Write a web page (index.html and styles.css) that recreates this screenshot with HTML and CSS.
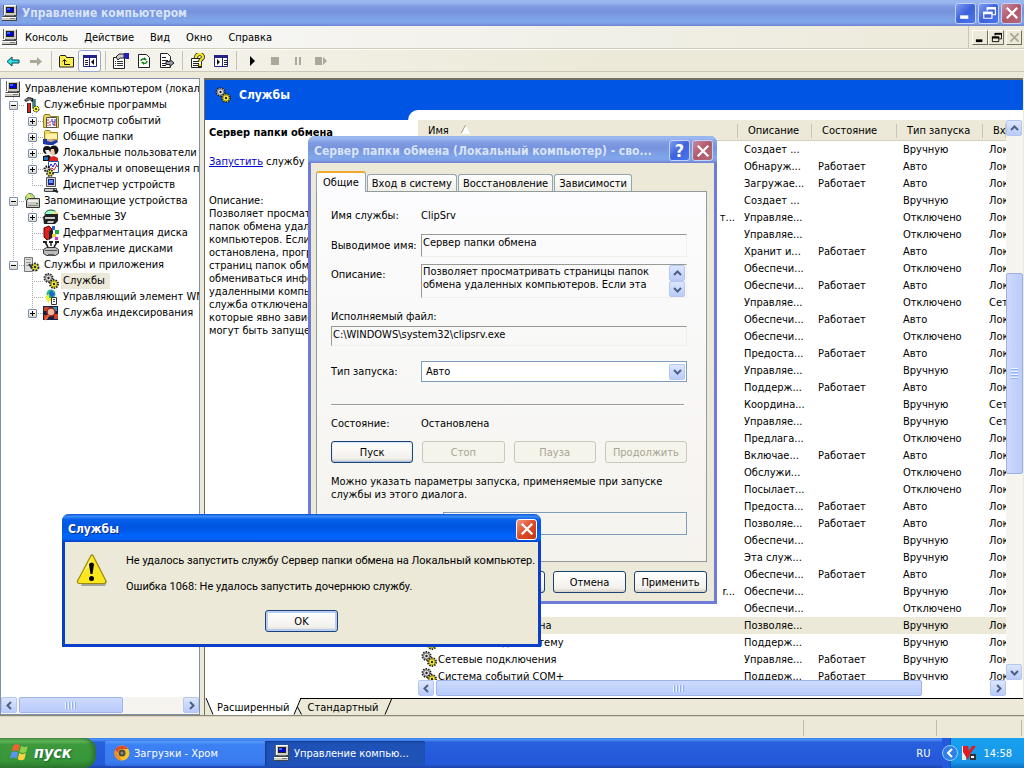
FILE: index.html
```html
<!DOCTYPE html>
<html lang="ru">
<head>
<meta charset="utf-8">
<title>Управление компьютером</title>
<link rel="stylesheet" href="styles.css">
</head>
<body>
<svg class="defs" width="0" height="0" aria-hidden="true">
  <symbol id="pc" viewBox="0 0 16 16">
    <path fill="#444" d="M3 0h11l1 1v10H3zM1 11h13l1 1v4H0v-4z"/>
    <path fill="#cfccc0" d="M2 0h12v10H2zM0 12h14v3H0z"/>
    <path fill="#777" d="M4 10h8v1H4zM8 13h5v1H8z"/>
    <path fill="#222" d="M4 2h8v6H4z"/><path fill="#00d" d="M5 3h6v4H5z"/><path fill="#36f" d="M5 3h3v2H5z"/>
    <path fill="#fff" d="M2 0h12v1H2zM2 0h1v10H2zM0 12h14v1H0z"/>
    <path fill="#666" d="M1 0h1v10H1z"/>
  </symbol>
  <symbol id="gears" viewBox="0 0 16 16">
    <circle cx="5.500" cy="5" r="4" fill="#bbb" stroke="#222" stroke-width="2" stroke-dasharray="1.400 1.100"/>
    <circle cx="5.500" cy="5" r="3" fill="#e8e8e8" stroke="#777"/><circle cx="5.500" cy="5" r="1.200" fill="#222"/>
    <circle cx="11" cy="11" r="4" fill="#dd3" stroke="#222" stroke-width="2" stroke-dasharray="1.400 1.100"/>
    <circle cx="11" cy="11" r="3" fill="#fbee3a" stroke="#a89a10"/><circle cx="11" cy="11" r="1.200" fill="#222"/>
  </symbol>
  <symbol id="tools" viewBox="0 0 16 16">
    <path fill="#222" d="M0 3l4-3 5 1 1 3-2 1-2-2-4 2zM3 6h4v10H3z"/><path fill="#d22" d="M4 6h2v9H4z"/>
    <path fill="#777" d="M1 2l3-1 4 1v1H5L2 4z"/><path stroke="#111" stroke-width="3" d="M10 2v9"/><path stroke="#3bb" stroke-width="1.4" d="M10 2v9"/>
    <circle cx="12" cy="12" r="3" fill="#ee3" stroke="#222" stroke-dasharray="2 1"/><circle cx="12" cy="12" r="1" fill="#222"/>
  </symbol>
  <symbol id="events" viewBox="0 0 16 16">
    <path fill="#e9d45c" stroke="#8c7a20" d="M.5 3.500l1-2h5l1 2h8v11H.5z"/><path fill="#fff" stroke="#555" d="M3.500 4.500h10v10h-10z"/>
    <path stroke="#c22" d="M5 6v7M7 8v5" stroke-dasharray="2 1"/><path fill="none" stroke="#22c" d="M9 6v3h3V6M9 11h2v2"/><path stroke="#c22" d="M12 9v4"/>
  </symbol>
  <symbol id="share" viewBox="0 0 16 16">
    <path fill="#eed964" stroke="#9a8425" d="M1.500 10V2.500l1-1h4l1 2h7V11z"/><path fill="#fff3a6" d="M3 5h11v5H3z"/>
    <path fill="#1d39a5" d="M0 10h4l3 2 7-1 1 2-5 3H5l-5-1z"/><path fill="#d5a889" d="M4 10h5l2 2-3 1-4-1z"/>
  </symbol>
  <symbol id="users" viewBox="0 0 16 16">
    <circle cx="4" cy="5" r="4" fill="#111"/><path fill="#eee" d="M2 5h4l2 3-4 2z"/><circle cx="11" cy="5" r="4.500" fill="#111"/>
    <path fill="#f0c9a8" d="M8 4h3l1 5-3 2-2-3z"/><path fill="#111" d="M0 11l6-1 3 3v3H0z"/><path fill="#d22" d="M7 12l4-1 4 2v3H6z"/><path fill="#1c6fb8" d="M1 12h4v3H1z"/>
  </symbol>
  <symbol id="perf" viewBox="0 0 16 16">
    <path fill="#fff" stroke="#25a" d="M5.500.5h10v11h-10z"/><path fill="none" stroke="#22c" d="M6 7l2-4 2 3 2-4 3 4"/><path fill="none" stroke="#d22" d="M6 9l3-2 2 2 3-5"/>
    <circle cx="4" cy="8" r="2.500" fill="#ccc" stroke="#111" stroke-width="2" stroke-dasharray="1.500 1"/><circle cx="7" cy="12" r="3" fill="#ee3" stroke="#333" stroke-width="2" stroke-dasharray="1.500 1"/><circle cx="7" cy="12" r="1" fill="#111"/>
  </symbol>
  <symbol id="device" viewBox="0 0 16 16">
    <path fill="#dad7ca" stroke="#555" d="M3.500.5h9v9h-9z"/><path fill="#228" d="M5 2h6v6H5z"/><path fill="#59f" d="M6 3h4v3H6z"/>
    <path fill="#ccc" stroke="#444" d="M1.500 11.500h12v3h-12z"/><path stroke="#222" stroke-width="2" d="M10 13l5 2"/>
  </symbol>
  <symbol id="storage" viewBox="0 0 16 16">
    <circle cx="6" cy="5" r="4.500" fill="#b7e070" stroke="#587"/><path fill="#f8e27a" d="M6 5l-4-3 3-1z"/><circle cx="6" cy="5" r="1" fill="#fff"/>
    <path fill="#c8c8c0" stroke="#333" d="M2.500 7.500l2-2h11v9h-13z"/><path fill="#888" d="M4 12h10v1H4z"/><path fill="#eee" d="M4 7h10v2H4z"/><path fill="#2a2" d="M12 10h2v1h-2z"/>
  </symbol>
  <symbol id="removable" viewBox="0 0 16 16">
    <ellipse cx="8" cy="5" rx="6" ry="4" fill="#9fc" stroke="#243"/><path fill="#f8e27a" d="M8 5l5-3 2 3z"/><path fill="#222" d="M0 8l3-3h12v7l-3 3H1z"/><path fill="#ccc" d="M2 8h10v2H2zM5 12h6l-1 2H4z"/>
  </symbol>
  <symbol id="defrag" viewBox="0 0 16 16">
    <path fill="#d22" stroke="#600" d="M1 3l5-2 3 3v8l-5 3-3-3z"/><path fill="#222" d="M6 6l4-2v8l-4 3z"/><path fill="#26c" d="M9 1h3v4H9z"/><path fill="#2a4" d="M12 5h4v4h-4z"/><path fill="#ec3" d="M9 9h4v3H9z"/><path fill="#c3c" d="M12 12h3v3h-3z"/>
  </symbol>
  <symbol id="disks" viewBox="0 0 16 16">
    <path fill="none" stroke="#222" stroke-width="1.500" d="M2 1l3 5M8 0v5M14 1l-3 5"/><path fill="#222" d="M0 0h4v2H0zM6 0h4v2H6zM12 0h4v2h-4z"/><path fill="#bbb" stroke="#333" d="M.5 8.500l3-2h9l3 2v4l-3 2h-9l-3-2z"/><path fill="#555" d="M2 9h12v1H2zM5 13h6v2H5z"/>
  </symbol>
  <symbol id="apps" viewBox="0 0 16 16">
    <path fill="#ddd" stroke="#777" d="M.5.5h8v14h-8z"/><path fill="#999" d="M2 2h5v1H2zM2 5h5v1H2zM2 8h5v1H2z"/>
    <circle cx="11" cy="10" r="3.500" fill="#ee3" stroke="#333" stroke-width="2" stroke-dasharray="2 1"/><circle cx="11" cy="10" r="1.300" fill="#333"/><path stroke="#333" stroke-width="2" d="M5 7l3 4"/>
  </symbol>
  <symbol id="wmi" viewBox="0 0 16 16">
    <circle cx="8" cy="5" r="4.500" fill="#2b8"/><path fill="#26c" d="M8 1l4 4-3 4-3-4z"/><path fill="#ee3" d="M2 8l4-3v4h4v3H6v3z"/><path fill="#fff" stroke="#333" d="M8.500 8.500h5v7h-5z"/><path fill="#338" d="M10 10h2v1h-2zM10 12h2v1h-2z"/>
  </symbol>
  <symbol id="index" viewBox="0 0 16 16">
    <path fill="#124" d="M0 1h15v14H0z"/><path fill="#c42" d="M1 2h5v4H1zM1 10h4v4H1zM11 9h4v5h-4z"/><path fill="#39b" d="M10 2h4v4h-4z"/><circle cx="8" cy="7" r="4" fill="#f2b89a" stroke="#922" stroke-width="1.500"/><path stroke="#e63" stroke-width="2" d="M6 10l-4 5"/>
  </symbol>
  <symbol id="left" viewBox="0 0 9 9"><path fill="none" stroke="#4d6185" stroke-width="2" d="M6 1L2.500 4.500 6 8"/></symbol>
  <symbol id="right" viewBox="0 0 9 9"><path fill="none" stroke="#4d6185" stroke-width="2" d="M3 1l3.500 3.500L3 8"/></symbol>
  <symbol id="up" viewBox="0 0 9 9"><path fill="none" stroke="#4d6185" stroke-width="2" d="M1 6l3.500-3.500L8 6"/></symbol>
  <symbol id="down" viewBox="0 0 9 9"><path fill="none" stroke="#4d6185" stroke-width="2" d="M1 3l3.500 3.500L8 3"/></symbol>
  <symbol id="cross" viewBox="0 0 12 12"><path stroke="currentColor" stroke-width="2" d="M1.500 1.500l9 9M10.500 1.500l-9 9"/></symbol>
  <symbol id="restore" viewBox="0 0 12 12"><path fill="none" stroke="currentColor" d="M4.500 4V1.500h7v6H9M1.500 5.500h7v5h-7z"/><path fill="currentColor" d="M4 1h8v2H4zM1 5h8v2H1z"/></symbol>
  <symbol id="min" viewBox="0 0 12 12"><path fill="currentColor" d="M1 8h7v3H1z"/></symbol>
</svg>

<main class="window">
  <header class="titlebar">
    <svg class="icon"><use href="#pc"/></svg>
    <h1>Управление компьютером</h1>
    <button class="cap blue" aria-label="Свернуть"><svg><use href="#min"/></svg></button>
    <button class="cap blue" aria-label="Восстановить"><svg><use href="#restore"/></svg></button>
    <button class="cap dull" aria-label="Закрыть"><svg><use href="#cross"/></svg></button>
  </header>

  <nav class="menubar">
    <svg class="icon"><use href="#pc"/></svg>
    <button>Консоль</button><button>Действие</button><button>Вид</button><button>Окно</button><button>Справка</button>
    <div class="mdi">
      <button aria-label="Свернуть окно"><svg><use href="#min"/></svg></button>
      <button aria-label="Восстановить окно"><svg><use href="#restore"/></svg></button>
      <button class="apart" aria-label="Закрыть окно" disabled><svg><use href="#cross"/></svg></button>
    </div>
  </nav>

  <div class="toolbar">
    <button aria-label="Назад"><svg class="icon" viewBox="0 0 16 16"><path fill="#2de0ea" stroke="#05484d" d="M2 8.500l5-4.500v3h7v3H7v3z"/></svg></button>
    <button aria-label="Вперед" disabled><svg class="icon" viewBox="0 0 16 16"><path fill="#aaa89b" d="M14 8.500L9 4v3H2v3h7v3z"/></svg></button>
    <i></i>
    <button aria-label="Вверх"><svg class="icon" viewBox="0 0 16 16"><path fill="#fbf04e" stroke="#222" d="M.5 14V3.500l1-1h5l1 2h7V14z"/><path fill="none" stroke="#111" d="M5.500 7v4.500H11M3.500 8.500l2-2 2 2"/></svg></button>
    <button class="pressed" aria-label="Дерево консоли"><svg class="icon" viewBox="0 0 16 16"><path fill="#fff" stroke="#228" d="M1.500 2.500h13v11h-13z"/><path fill="#228" d="M1 2h14v3H1zM7 5h1v9H7z"/><path stroke="#222" d="M3 7.500h3M3 9.500h3M3 11.500h3"/><path fill="#111" d="M12 6v6L9 9z"/></svg></button>
    <i></i>
    <button aria-label="Свойства"><svg class="icon" viewBox="0 0 16 16"><path fill="#fff" stroke="#222" d="M.5 4.500h11v11H.5z"/><path stroke="#333" d="M2 8.500h1M4 8.500h6M2 10.500h1M4 10.500h6M2 12.500h1M4 12.500h6"/><path fill="#ccc" stroke="#222" d="M3 4l3-3h5v4H7L5 7z"/><path fill="#22a" d="M11 0h5v6h-3l-2-1z"/></svg></button>
    <button aria-label="Обновить"><svg class="icon" viewBox="0 0 16 16"><path fill="#fff" stroke="#222" d="M2.500 1.500h8l3 3v10h-11z"/><path fill="none" stroke="#181" stroke-width="1.500" d="M5 8c0-2 3-3 5-1M11 8c0 3-3 3-5 1"/><path fill="#181" d="M8 4l3 3H8zM8 12l-3-3h3z"/></svg></button>
    <button aria-label="Экспорт"><svg class="icon" viewBox="0 0 16 16"><path fill="#fff" stroke="#222" d="M1.500.5h7l3 3v11h-10z"/><path stroke="#222" d="M3 4.500h4M3 7.500h6M3 10.500h4M3 12.500h4"/><path fill="#99a" stroke="#222" d="M7 8.500h4v-2l4 3.500-4 3.500v-2H7z"/></svg></button>
    <i></i>
    <button aria-label="Справка"><svg class="icon" viewBox="0 0 16 16"><path fill="#fff" stroke="#222" d="M1.500 5.500h10v9h-10z"/><path stroke="#222" d="M3 8.500h6M3 10.500h6M3 12.500h6"/><path fill="none" stroke="#222" stroke-width="4" d="M6 5c0-5 7-5 7-1 0 2-3 2-3 5M10 11v3"/><path fill="none" stroke="#f5e526" stroke-width="2.400" d="M6 5c0-5 7-5 7-1 0 2-3 2-3 5M10 11v2"/></svg></button>
    <button aria-label="Панель действий"><svg class="icon" viewBox="0 0 16 16"><path fill="#fff" stroke="#228" d="M1.500 2.500h13v11h-13z"/><path fill="#228" d="M1 2h14v3H1zM9 5h1v9H9z"/><path stroke="#222" d="M11 7.500h3M11 9.500h3M11 11.500h3"/><path fill="#111" d="M4 6v6l3-3z"/></svg></button>
    <i></i>
    <button aria-label="Запуск службы"><svg class="icon" viewBox="0 0 16 16"><path d="M6 3v10l5-5z"/></svg></button>
    <button aria-label="Остановка службы" disabled><svg class="icon" viewBox="0 0 16 16"><path fill="#aaa89b" d="M4 4h8v8H4z"/></svg></button>
    <button aria-label="Приостановка службы" disabled><svg class="icon" viewBox="0 0 16 16"><path fill="#aaa89b" d="M5 4h2v8H5zM9 4h2v8H9z"/></svg></button>
    <button aria-label="Перезапуск службы" disabled><svg class="icon" viewBox="0 0 16 16"><path fill="#aaa89b" d="M2 4h7v8H2zM10 4l4 4-4 4z"/></svg></button>
  </div>

  <div class="work">
    <aside class="tree">
      <div class="tree-body">
        <a class="node root" href="#"><svg class="icon"><use href="#pc"/></svg><span>Управление компьютером (локальным)</span></a>
        <ul>
          <li><a class="node" href="#"><b class="pm"></b><svg class="icon"><use href="#tools"/></svg><span>Служебные программы</span></a>
            <ul>
              <li><a class="node" href="#"><b class="pm plus"></b><svg class="icon"><use href="#events"/></svg><span>Просмотр событий</span></a></li>
              <li><a class="node" href="#"><b class="pm plus"></b><svg class="icon"><use href="#share"/></svg><span>Общие папки</span></a></li>
              <li><a class="node" href="#"><b class="pm plus"></b><svg class="icon"><use href="#users"/></svg><span>Локальные пользователи</span></a></li>
              <li><a class="node" href="#"><b class="pm plus"></b><svg class="icon"><use href="#perf"/></svg><span>Журналы и оповещения производительности</span></a></li>
              <li><a class="node" href="#"><b class="leaf"></b><svg class="icon"><use href="#device"/></svg><span>Диспетчер устройств</span></a></li>
            </ul>
          </li>
          <li><a class="node" href="#"><b class="pm"></b><svg class="icon"><use href="#storage"/></svg><span>Запоминающие устройства</span></a>
            <ul>
              <li><a class="node" href="#"><b class="pm plus"></b><svg class="icon"><use href="#removable"/></svg><span>Съемные ЗУ</span></a></li>
              <li><a class="node" href="#"><b class="leaf"></b><svg class="icon"><use href="#defrag"/></svg><span>Дефрагментация диска</span></a></li>
              <li><a class="node" href="#"><b class="leaf"></b><svg class="icon"><use href="#disks"/></svg><span>Управление дисками</span></a></li>
            </ul>
          </li>
          <li><a class="node" href="#"><b class="pm"></b><svg class="icon"><use href="#apps"/></svg><span>Службы и приложения</span></a>
            <ul>
              <li><a class="node current" href="#"><b class="leaf"></b><svg class="icon"><use href="#gears"/></svg><span>Службы</span></a></li>
              <li><a class="node" href="#"><b class="leaf"></b><svg class="icon"><use href="#wmi"/></svg><span>Управляющий элемент WMI</span></a></li>
              <li><a class="node" href="#"><b class="pm plus"></b><svg class="icon"><use href="#index"/></svg><span>Служба индексирования</span></a></li>
            </ul>
          </li>
        </ul>
      </div>
      <div class="hscroll">
        <button class="sb" aria-label="Влево"><svg><use href="#left"/></svg></button>
        <div class="track"><div class="thumb tree-thumb"></div></div>
        <button class="sb" aria-label="Вправо"><svg><use href="#right"/></svg></button>
      </div>
    </aside>

    <section class="details">
      <div class="banner"><svg class="icon"><use href="#gears"/></svg><h2>Службы</h2></div>
      <div class="banner-foot"><div></div></div>
      <div class="content">
        <div class="info">
          <h3>Сервер папки обмена</h3>
          <p class="action"><a href="#">Запустить</a> службу</p>
          <p>Описание:<br>Позволяет просматривать<br>папок обмена удаленных<br>компьютеров. Если эта<br>остановлена, программа<br>страниц папок обмена<br>обмениваться информацией<br>удаленными компьютерами.<br>служба отключена,<br>которые явно зависят<br>могут быть запущены.</p>
        </div>
        <div class="list">
          <div class="rows">
            <table>
              <colgroup><col class="c-name"><col class="c-desc"><col class="c-state"><col class="c-start"><col class="c-logon"></colgroup>
              <thead><tr><th>Имя<svg class="sort" viewBox="0 0 9 9"><path fill="#fff" d="M4.500 0L9 9H0z"/><path stroke="#9a9788" fill="none" d="M0 8.500L4.500 0"/></svg></th><th>Описание</th><th>Состояние</th><th>Тип запуска</th><th>Вход от имени</th></tr></thead>
              <tbody>
                <tr><td></td><td>Создает ...</td><td></td><td>Вручную</td><td>Локальная система</td></tr>
                <tr><td></td><td>Обнаруж...</td><td>Работает</td><td>Авто</td><td>Локальная система</td></tr>
                <tr><td></td><td>Загружае...</td><td>Работает</td><td>Авто</td><td>Локальная система</td></tr>
                <tr><td></td><td>Создает ...</td><td></td><td>Вручную</td><td>Локальная система</td></tr>
                <tr><td class="tail">т...</td><td>Управляе...</td><td></td><td>Отключено</td><td>Локальная система</td></tr>
                <tr><td></td><td>Управляе...</td><td></td><td>Отключено</td><td>Локальная система</td></tr>
                <tr><td></td><td>Хранит и...</td><td>Работает</td><td>Авто</td><td>Локальная система</td></tr>
                <tr><td></td><td>Обеспечи...</td><td></td><td>Отключено</td><td>Локальная система</td></tr>
                <tr><td></td><td>Обеспечи...</td><td>Работает</td><td>Авто</td><td>Локальная система</td></tr>
                <tr><td></td><td>Управляе...</td><td></td><td>Отключено</td><td>Сетевая служба</td></tr>
                <tr><td></td><td>Обеспечи...</td><td>Работает</td><td>Авто</td><td>Локальная система</td></tr>
                <tr><td></td><td>Обеспечи...</td><td></td><td>Отключено</td><td>Локальная система</td></tr>
                <tr><td></td><td>Предоста...</td><td>Работает</td><td>Авто</td><td>Локальная система</td></tr>
                <tr><td></td><td>Управляе...</td><td></td><td>Вручную</td><td>Локальная система</td></tr>
                <tr><td></td><td>Поддерж...</td><td>Работает</td><td>Авто</td><td>Локальная система</td></tr>
                <tr><td></td><td>Координа...</td><td></td><td>Вручную</td><td>Сетевая служба</td></tr>
                <tr><td></td><td>Управляе...</td><td></td><td>Вручную</td><td>Сетевая служба</td></tr>
                <tr><td></td><td>Предлага...</td><td></td><td>Отключено</td><td>Локальная система</td></tr>
                <tr><td></td><td>Включае...</td><td>Работает</td><td>Авто</td><td>Локальная система</td></tr>
                <tr><td></td><td>Обслужи...</td><td></td><td>Отключено</td><td>Локальная система</td></tr>
                <tr><td></td><td>Посылает...</td><td></td><td>Отключено</td><td>Локальная система</td></tr>
                <tr><td></td><td>Предоста...</td><td>Работает</td><td>Авто</td><td>Локальная система</td></tr>
                <tr><td></td><td>Позволяе...</td><td>Работает</td><td>Авто</td><td>Локальная система</td></tr>
                <tr><td></td><td>Обеспечи...</td><td></td><td>Вручную</td><td>Локальная система</td></tr>
                <tr><td></td><td>Эта служ...</td><td></td><td>Вручную</td><td>Локальная система</td></tr>
                <tr><td></td><td>Обеспечи...</td><td>Работает</td><td>Авто</td><td>Локальная система</td></tr>
                <tr><td class="tail">r...</td><td>Обеспечи...</td><td></td><td>Вручную</td><td>Локальная система</td></tr>
                <tr><td></td><td>Обеспечи...</td><td></td><td>Отключено</td><td>Локальная система</td></tr>
                <tr class="selected"><td><svg class="icon"><use href="#gears"/></svg>Сервер папки обмена</td><td>Позволяе...</td><td></td><td>Вручную</td><td>Локальная система</td></tr>
                <tr><td><svg class="icon"><use href="#gears"/></svg>Сетевой вход в систему</td><td>Поддерж...</td><td></td><td>Вручную</td><td>Локальная система</td></tr>
                <tr><td><svg class="icon"><use href="#gears"/></svg>Сетевые подключения</td><td>Управляе...</td><td>Работает</td><td>Вручную</td><td>Локальная система</td></tr>
                <tr><td><svg class="icon"><use href="#gears"/></svg>Система событий COM+</td><td>Поддерж...</td><td>Работает</td><td>Вручную</td><td>Локальная система</td></tr>
              </tbody>
            </table>
          </div>
          <div class="vscroll">
            <button class="sb" aria-label="Вверх"><svg><use href="#up"/></svg></button>
            <div class="track"><div class="before"></div><div class="thumb"></div><div class="after"></div></div>
            <button class="sb" aria-label="Вниз"><svg><use href="#down"/></svg></button>
          </div>
          <div class="hscroll">
            <button class="sb" aria-label="Влево"><svg><use href="#left"/></svg></button>
            <div class="track"><div class="thumb list-thumb"></div></div>
            <button class="sb" aria-label="Вправо"><svg><use href="#right"/></svg></button>
          </div>
        </div>
      </div>
      <div class="views">
        <svg class="slash" viewBox="0 0 10 17"><path fill="#fff" d="M0 0h10v17H8z"/><path stroke="#000" fill="none" d="M1 0l7 16.500"/></svg>
        <button class="on">Расширенный</button>
        <svg class="slash wide" viewBox="0 0 14 17"><path fill="#fff" d="M0 0h9L2 17H0z"/><path stroke="#000" fill="none" d="M9 0L2 16.500M5.500 9l4 7.500M8 .5h6"/></svg>
        <button>Стандартный</button>
        <svg class="slash wide" viewBox="0 0 14 17"><path stroke="#000" fill="none" d="M12 0L5 16.500M0 .5h14"/></svg>
        <div class="rest"></div>
      </div>
    </section>
  </div>

  <footer class="status"><span></span><span></span><span></span></footer>
</main>

<nav class="taskbar">
  <button class="start"><svg viewBox="0 0 18 18"><path fill="#f0652f" d="M3 3q3-2 6 0L7.500 8.500q-3-2-6 0z"/><path fill="#8cd04c" d="M10 3.500q3 2 6 0L14.500 9q-3 2-6 0z"/><path fill="#5c92f2" d="M1.200 9.500q3-2 6 0L6 15q-3-2-6 0z"/><path fill="#fbd13c" d="M8.300 10q3 2 6 0L13 15.500q-3 2-6 0z"/></svg>пуск</button>
  <button class="task"><svg class="icon" viewBox="0 0 16 16"><circle cx="8" cy="8" r="7.500" fill="#f5c22c"/><path fill="#dd4b2c" d="M1 5a7.500 7.500 0 0 1 13-1H8a4 4 0 0 0-4 4z"/><path fill="#ee8a22" d="M1 5l4 6 3 4.500A7.500 7.500 0 0 1 1 5z"/><circle cx="8" cy="8" r="3.500" fill="#4a4a3c"/><circle cx="8" cy="8" r="1.500" fill="#889"/></svg>Загрузки - Хром</button>
  <button class="task active"><svg class="icon"><use href="#pc"/></svg>Управление компью...</button>
  <span class="lang">RU</span>
  <div class="tray">
    <button aria-label="Показать значки"><svg viewBox="0 0 16 16"><circle cx="8" cy="8" r="7.500" fill="#2f7fe6" stroke="#8fd0ff"/><path fill="none" stroke="#fff" stroke-width="2" d="M10 4L6 8l4 4"/></svg></button>
    <svg class="icon" viewBox="0 0 16 16"><path fill="#e8efe8" d="M1 1h4v14H1z"/><path fill="#e01c1c" d="M2 1h5l1 5 3-5h4L9 9l-2 6-5-8z"/><path fill="#333" d="M9 9h6v6H9z"/><path fill="#fff" d="M10 11h3v2h-3z"/></svg>
    <time>14:58</time>
  </div>
</nav>

<section class="dialog props" role="dialog" aria-labelledby="props-title">
  <header class="titlebar">
    <h2 id="props-title">Сервер папки обмена (Локальный компьютер) - сво...</h2>
    <button class="cap blue" aria-label="Справка">?</button>
    <button class="cap dull" aria-label="Закрыть"><svg><use href="#cross"/></svg></button>
  </header>
  <div class="tabs" role="tablist">
    <button role="tab" class="on" aria-selected="true">Общие</button>
    <button role="tab">Вход в систему</button>
    <button role="tab">Восстановление</button>
    <button role="tab">Зависимости</button>
  </div>
  <form class="panel">
    <div class="line r-name"><span>Имя службы:</span><span>ClipSrv</span></div>
    <div class="line r-display"><label for="display">Выводимое имя:</label><input id="display" class="sunken" readonly value="Сервер папки обмена"></div>
    <div class="line r-desc"><label for="desc">Описание:</label>
      <div class="sunken area"><textarea id="desc" readonly>Позволяет просматривать страницы папок
обмена удаленных компьютеров. Если эта</textarea>
        <div class="spin"><button type="button" class="sb" aria-label="Вверх"><svg><use href="#up"/></svg></button><button type="button" class="sb" aria-label="Вниз"><svg><use href="#down"/></svg></button></div>
      </div>
    </div>
    <label class="path-label" for="path">Исполняемый файл:</label>
    <input id="path" class="sunken path" readonly value="C:\WINDOWS\system32\clipsrv.exe">
    <div class="line r-type"><label for="type">Тип запуска:</label>
      <div class="combo"><select id="type"><option>Авто</option><option>Вручную</option><option>Отключено</option></select><span class="sb"><svg><use href="#down"/></svg></span></div>
    </div>
    <hr>
    <div class="line r-state"><span>Состояние:</span><span>Остановлена</span></div>
    <div class="controls"><button type="button" class="btn">Пуск</button><button type="button" class="btn" disabled>Стоп</button><button type="button" class="btn" disabled>Пауза</button><button type="button" class="btn" disabled>Продолжить</button></div>
    <p>Можно указать параметры запуска, применяемые при запуске<br>службы из этого диалога.</p>
    <div class="line r-args"><label for="args">Параметры запуска:</label><input id="args"></div>
  </form>
  <div class="actions"><button class="btn">ОК</button><button class="btn">Отмена</button><button class="btn">Применить</button></div>
</section>

<section class="dialog alert" role="alertdialog" aria-labelledby="alert-title">
  <header class="titlebar">
    <h2 id="alert-title">Службы</h2>
    <button class="cap red" aria-label="Закрыть"><svg><use href="#cross"/></svg></button>
  </header>
  <div class="message">
    <svg class="warn" viewBox="0 0 32 32"><path fill="#777" opacity=".6" d="M17 3l14 25-2 4H5z"/><path fill="#fbe71c" stroke="#9a8a10" stroke-width="1.200" stroke-linejoin="round" d="M15 1.500q1-1 2 0L30 27q0 2-2 2.500H3Q1 29 1.500 27z"/><path fill="#fff6a0" opacity=".7" d="M15 4L5 23q6-10 11-12z"/><path d="M13 10q2.500-3 5 0l-1.500 10h-2z"/><circle cx="15.500" cy="24.500" r="2.500"/></svg>
    <div><p>Не удалось запустить службу Сервер папки обмена на Локальный компьютер.</p><p>Ошибка 1068: Не удалось запустить дочернюю службу.</p></div>
  </div>
  <button class="btn">OK</button>
</section>
</body>
</html>
```

FILE: styles.css
```css
* { box-sizing: border-box; }
html, body { height: 100%; }
body {
  margin: 0;
  display: flex;
  flex-direction: column;
  position: relative;
  overflow: hidden;
  background: #ece9d8;
  color: #000;
  font: 11px/13px "DejaVu Sans Condensed", "Open Sans", sans-serif;
}
h1, h2, h3, p, ul { margin: 0; padding: 0; }
ul { list-style: none; }
button, input, select, textarea { font: inherit; color: inherit; margin: 0; padding: 0; border: 0; background: none; border-radius: 0; }
button { white-space: nowrap; }
a { color: inherit; text-decoration: none; }
svg { display: block; flex: none; }
.defs { position: absolute; }
.icon { width: 16px; height: 16px; }

/* window frame */
.window { flex: 1; min-height: 0; display: flex; flex-direction: column; }
.titlebar {
  display: flex;
  align-items: center;
  gap: 2px;
  height: 26px;
  padding: 0 2px;
  color: #d8e4f8;
  background: linear-gradient(#96b4ee, #9db9f0 8%, #7f9be2 25%, #7893dd 45%, #80a6ea 80%, #7d9fe6 90%, #7080d0);
}
.titlebar h1, .titlebar h2 { flex: 1; min-width: 0; overflow: hidden; white-space: nowrap; font-size: 12px; line-height: 16px; font-weight: bold; }
.titlebar h1 { padding-left: 2px; }
.cap {
  display: grid;
  place-items: center;
  flex: none;
  width: 21px;
  height: 21px;
  border: 1px solid #c3d3f7;
  border-radius: 3px;
  color: #fff;
  font-size: 18px;
  font-weight: bold;
}
.cap svg { width: 14px; height: 14px; }
.cap.blue { background: linear-gradient(135deg, #7f9df0, #3d62dc 50%, #4a78ee); }
.cap.dull { background: linear-gradient(135deg, #c98ba4, #b05768 50%, #b56a78); }
.cap.red { border-color: #fff; background: linear-gradient(135deg, #f09a80, #dd4b26 50%, #c63a12); }

.menubar {
  display: flex;
  align-items: center;
  height: 23px;
  padding-left: 2px;
  background: linear-gradient(90deg, #fafafa, #f2f1ea 50%, #ece9d8);
  border-bottom: 1px solid #d0ccba;
}
.menubar > button { padding: 0 8px; }
.menubar > .icon { margin-right: -1px; }
.mdi { display: flex; margin-left: auto; align-self: stretch; align-items: center; padding: 0 2px 0 3px; border-left: 1px solid #cbc7b8; }
.mdi button { display: grid; place-items: center; width: 16px; height: 15px; background: #ece9d8; border: 1px solid; border-color: #fff #716f64 #716f64 #fff; }
.mdi svg { width: 11px; height: 11px; }
.mdi .apart { margin-left: 2px; color: #aca899; }

.toolbar {
  display: flex;
  align-items: center;
  height: 23px;
  padding-left: 1px;
  background: linear-gradient(90deg, #f7f6f1, #ece9d8 60%);
  border-top: 1px solid #fff;
  border-bottom: 1px solid #cbc7b8;
}
.toolbar button { display: grid; place-items: center; width: 23px; height: 22px; }
.toolbar .pressed { background: #fff; border: 1px solid #98a8c8; border-radius: 3px; }
.toolbar i { width: 8px; height: 19px; background: linear-gradient(#c6c2b2, #c6c2b2) center / 1px 100% no-repeat; }

.work { flex: 1; min-height: 0; display: flex; gap: 4px; padding-top: 6px; border-bottom: 1px solid #8b8878; }

/* console tree */
.tree { flex: none; width: 200px; display: flex; flex-direction: column; background: #fff; border: 1px solid #7f8fa8; }
.tree-body { flex: 1; min-height: 0; overflow: hidden; padding: 2px 0 0 8px; }
.node { display: flex; align-items: center; height: 16px; white-space: nowrap; }
.node .icon { margin-right: 2px; }
.node span { padding: 0 2px; line-height: 16px; }
.root { margin-left: -4px; }
.current span { background: #ece9d8; padding-right: 5px; }
.tree ul { background: repeating-linear-gradient(#aaa 0 1px, transparent 1px 2px) 4px 0 / 1px calc(100% - 8px) no-repeat; }
.tree-body > ul { background-size: 1px calc(100% - 56px); }
.tree ul ul { margin-left: 19px; }
.pm, .leaf { flex: none; width: 15px; height: 9px; background: repeating-linear-gradient(90deg, #aaa 0 1px, transparent 1px 2px) 4px 4px / 11px 1px no-repeat; }
.pm::before {
  content: "";
  display: block;
  box-sizing: border-box;
  width: 9px;
  height: 9px;
  border: 1px solid #7b8fa8;
  border-radius: 1px;
  background: linear-gradient(#000, #000) center / 5px 1px no-repeat, linear-gradient(#fff, #d8d4c8);
}
.plus::before { background: linear-gradient(#000, #000) center / 5px 1px no-repeat, linear-gradient(#000, #000) center / 1px 5px no-repeat, linear-gradient(#fff, #d8d4c8); }

/* scroll bars */
.sb { display: grid; place-items: center; flex: none; width: 16px; height: 16px; border: 1px solid #b4c6f2; border-radius: 2px; background: linear-gradient(#dce6fe, #b9cbf9); }
.sb svg { width: 9px; height: 9px; }
.hscroll { display: flex; height: 17px; background: #f5f4ee; }
.hscroll .track { flex: 1; padding: 0 2px; display: flex; }
.thumb { border: 1px solid #9db3e8; border-radius: 2px; background: linear-gradient(#cddafe, #b9cbfb); display: grid; place-items: center; }
.thumb::before { content: ""; width: 12px; height: 7px; background: repeating-linear-gradient(90deg, #eef4fe 0 1px, #8cb0f8 1px 2px, transparent 2px 3px); }
.hscroll .thumb { height: 16px; }
.tree-thumb { width: 64%; }
.list-thumb { width: 88%; }
.vscroll { display: flex; flex-direction: column; background: #f5f4ee; }
.vscroll .track { flex: 1; display: flex; flex-direction: column; }
.vscroll .before { flex: 137; }
.vscroll .thumb { flex: 200; background: linear-gradient(90deg, #cddafe, #b9cbfb); }
.vscroll .thumb::before { width: 7px; height: 12px; background: repeating-linear-gradient(#eef4fe 0 1px, #8cb0f8 1px 2px, transparent 2px 3px); }
.vscroll .after { flex: 190; }

/* details pane */
.details { flex: 1; min-width: 0; display: flex; flex-direction: column; border: 1px solid #716f64; border-width: 2px 0 0 1px; background: #fff; margin-right: 1px; }
.banner { display: flex; align-items: center; gap: 8px; height: 30px; padding-left: 10px; background: #0055e5; color: #fff; }
.banner h2 { font-size: 12px; line-height: 16px; }
.banner-foot { background: #0055e5; padding-left: 203px; }
.banner-foot div { height: 10px; background: #fff; border-top-left-radius: 10px; }
.content { flex: 1; min-height: 0; display: flex; }
.info { flex: none; width: 213px; padding: 6px 4px; white-space: nowrap; }
.info h3 { font-size: 11px; line-height: 13px; }
.info .action { margin: 16px 0 26px; }
.info .action a { color: #00c; text-decoration: underline; }
.list { flex: 1; min-width: 0; min-height: 0; display: grid; grid-template: minmax(0, 1fr) 17px / minmax(0, 1fr) 17px; }
.list > .hscroll { background: #fff; }
.rows { overflow: hidden; }
table { width: 100%; table-layout: fixed; border-collapse: collapse; }
.c-desc { width: 74px; }
.c-state { width: 85px; }
.c-start { width: 86px; }
.c-logon { width: 23px; }
th { height: 21px; padding: 0 0 0 10px; text-align: left; font-weight: normal; white-space: nowrap; overflow: hidden; background: linear-gradient(#c9c5b4, #c9c5b4) right center / 1px 14px no-repeat, #ece9d8; box-shadow: inset 0 -1px #d3cfbd; }
.sort { display: inline-block; width: 9px; height: 9px; margin-left: 12px; }
td { height: 17px; padding: 0 0 0 6px; line-height: 17px; white-space: nowrap; overflow: hidden; }
td:first-child { padding-left: 3px; }
td .icon { float: left; margin-right: 1px; }
td.tail { text-align: right; padding-right: 3px; }
.selected { background: #ece9d8; }

.views { display: flex; height: 17px; margin-top: 1px; background: #ece9d8; }
.slash { width: 10px; height: 17px; }
.slash.wide { width: 14px; }
.views button { padding: 0 2px; border-top: 1px solid #000; }
.views .on { background: #fff; border-top-color: #fff; }
.views .rest { flex: 1; border-top: 1px solid #000; }

.status { display: flex; justify-content: flex-end; height: 22px; padding: 3px 2px 2px 0; border-top: 1px solid #d8d4c4; }
.status span { width: 133px; border-right: 1px solid #c0bcac; }
.status span:last-child { width: 85px; }

/* taskbar */
.taskbar {
  flex: none;
  display: flex;
  align-items: center;
  height: 30px;
  color: #fff;
  background: linear-gradient(#3a80ee, #4a90f5 6%, #2860dc 14%, #245adb 60%, #2459d8 88%, #1c43a8);
}
.start {
  display: flex;
  align-items: center;
  gap: 4px;
  width: 96px;
  height: 30px;
  padding: 0 0 2px 10px;
  margin-right: 9px;
  border-radius: 0 12px 12px 0;
  font-size: 16px;
  font-weight: bold;
  font-style: italic;
  text-shadow: 1px 1px 2px #163;
  background: linear-gradient(#5a9c52, #62b75a 10%, #3c9a3c 22%, #379637 75%, #2c7a2c);
  box-shadow: inset -3px 0 4px #2a7030;
}
.start svg { width: 20px; height: 20px; }
.task { display: flex; align-items: center; gap: 4px; width: 160px; height: 25px; padding-left: 9px; border-radius: 2px; background: linear-gradient(#5b9cf8, #3c81f3 15%, #3a7cf0 85%, #2f6be0); }
.task.active { background: #1e52b7; box-shadow: inset 1px 1px 2px #143a86; }
.lang { margin-left: auto; padding-right: 12px; }
.tray { display: flex; align-items: center; gap: 3px; height: 30px; padding-right: 12px; background: linear-gradient(90deg, #245adb 8px, #0c56b8 8px 9px, transparent 9px), linear-gradient(#18a0ee, #1796ea 80%, #0f6fc0); }
.tray button svg { width: 16px; height: 16px; }
.tray time { padding-left: 3px; }

/* dialogs */
.dialog { position: absolute; display: flex; flex-direction: column; background: #ece9d8; border: 3px solid #6f7bd8; border-top: 0; border-radius: 7px 7px 0 0; }
.dialog .titlebar { height: 27px; margin: 0 -3px; padding: 2px 4px 0 6px; border-radius: 7px 7px 0 0; }
.btn { height: 22px; border: 1px solid #1c4273; border-radius: 3px; background: linear-gradient(#fff, #f2f1ec 80%, #d8d2c6); }
.btn:disabled { color: #a8a596; border-color: #c9c7ba; background: #f5f4ea; }

.props { left: 308px; top: 136px; width: 409px; }
.tabs { display: flex; align-items: flex-end; gap: 1px; padding: 8px 5px 0; }
.tabs button { height: 17px; padding: 0 4px; border: 1px solid #91a7b4; border-bottom: 0; border-radius: 3px 3px 0 0; background: linear-gradient(#fff, #f0efe6); }
.tabs .on { height: 21px; margin-bottom: -1px; padding: 0 6px; z-index: 1; background: #fcfcfe; border-top: 2px solid #f0a830; }
.panel { display: flex; flex-direction: column; margin: 0 7px 0 5px; padding: 13px 19px 26px 14px; border: 1px solid #919b9c; background: linear-gradient(#fcfcfe, #f4f3ee); }
.line { display: flex; align-items: center; }
.line > :first-child { flex: none; width: 90px; white-space: nowrap; }
.line > :nth-child(2) { flex: 1; min-width: 0; }
.sunken { border: 1px solid; border-color: #9a9a94 #f0efe8 #f0efe8 #9a9a94; padding: 0 1px; }
.r-name { height: 20px; }
.r-display { height: 23px; margin-top: 9px; }
.r-display input { height: 23px; padding-bottom: 6px; }
.r-desc { height: 34px; margin-top: 7px; align-items: flex-start; }
.r-desc label { line-height: 22px; }
.area { display: flex; height: 34px; }
.area textarea { flex: 1; min-width: 0; resize: none; overflow: hidden; white-space: pre; outline: 0; }
.spin { display: flex; flex-direction: column; }
.path-label { margin-top: 11px; line-height: 16px; }
.path { height: 20px; padding-bottom: 3px; margin-top: 1px; }
.r-type { margin-top: 15px; }
.combo { display: flex; align-items: center; height: 21px; padding: 1px; border: 1px solid #7f9db9; background: #fff; }
.combo select { flex: 1; padding-left: 3px; appearance: none; outline: 0; }
.panel hr { align-self: stretch; height: 2px; margin: 22px 3px 0 0; border: 0; border-top: 1px solid #9d9c94; border-bottom: 1px solid #fff; }
.r-state { height: 16px; margin-top: 9px; }
.controls { display: grid; grid-template-columns: repeat(4, 1fr); gap: 9px; margin-top: 10px; }
.controls .btn:first-child { box-shadow: inset 0 -1px 1px #9dbcea, inset 0 1px 1px #cfe0fb; }
.panel p { margin-top: 12px; white-space: nowrap; }
.panel .r-args { margin-top: 11px; }
.r-args > :first-child { width: 112px; }
.r-args input { height: 23px; border: 1px solid #7f9db9; }
.actions { display: flex; justify-content: flex-end; gap: 8px; padding: 9px 7px 8px; }
.actions .btn { width: 73px; }

.alert { left: 62px; top: 514px; width: 479px; border-color: #0b3fc8; }
.alert .titlebar { height: 28px; color: #fff; text-shadow: 1px 1px #0f2a80; background: linear-gradient(#0a50d8, #3b8cf8 8%, #0560ea 20%, #0054e0 45%, #0066fc 80%, #0060f0 90%, #0040c0); }
.message { display: flex; gap: 18px; padding: 12px 6px 0 11px; white-space: nowrap; font-family: Roboto, "Liberation Sans", sans-serif; }
.warn { width: 32px; height: 32px; }
.message p { margin-bottom: 13px; }
.alert > .btn { align-self: center; width: 73px; margin: 4px 0 12px; box-shadow: inset 0 0 0 2px #b8cdf4; }
```
